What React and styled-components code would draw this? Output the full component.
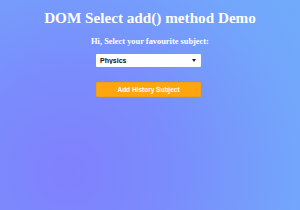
import React from 'react';
import styled, { createGlobalStyle } from 'styled-components';

const GlobalStyle = createGlobalStyle`
  html, body {
    margin: 0;
    padding: 0;
  }
  body {
    font-family: 'Liberation Serif', 'Times New Roman', serif;
  }
`;

const Page = styled.div`
  width: 300px;
  height: 210px;
  box-sizing: border-box;
  padding-top: 8px;
  display: flex;
  flex-direction: column;
  align-items: center;
  color: #fff;
  background: radial-gradient(circle at 23% 82%, #8080fd 0%, #7a8cfc 35%, #72a6fb 80%, #70aafa 100%);
`;

const Title = styled.h1`
  margin: 0;
  font-size: 15.2px;
  font-weight: bold;
  line-height: 20px;
`;

const Prompt = styled.p`
  margin: 9px 0 0;
  font-size: 8.4px;
  font-weight: bold;
  line-height: 10px;
`;

const SelectWrap = styled.div`
  position: relative;
  margin-top: 7px;
  margin-right: 3px;
  &::after {
    content: '';
    position: absolute;
    right: 5px;
    top: 5px;
    border-left: 2px solid transparent;
    border-right: 2px solid transparent;
    border-top: 3px solid #222;
    pointer-events: none;
  }
`;

const SelectBox = styled.select`
  display: block;
  width: 105px;
  height: 13px;
  box-sizing: border-box;
  border: none;
  border-radius: 1px;
  padding: 0 0 0 4px;
  font-family: 'Liberation Sans', Arial, sans-serif;
  font-size: 7px;
  font-weight: bold;
  color: #111;
  background: #fff;
  appearance: none;
  -webkit-appearance: none;
`;

const Button = styled.button`
  margin-top: 15px;
  margin-right: 3px;
  width: 105px;
  height: 15px;
  box-sizing: border-box;
  border: 1px solid #f0a010;
  border-radius: 1px;
  background: #ffa50f;
  color: #fff;
  font-family: 'Liberation Sans', Arial, sans-serif;
  font-size: 6.5px;
  font-weight: bold;
  padding: 0;
`;

export default function App() {
  return (
    <>
      <GlobalStyle />
      <Page>
        <Title>DOM Select add() method Demo</Title>
        <Prompt>Hi, Select your favourite subject:</Prompt>
        <SelectWrap>
          <SelectBox defaultValue="physics">
            <option value="physics">Physics</option>
            <option value="chemistry">Chemistry</option>
            <option value="maths">Maths</option>
          </SelectBox>
        </SelectWrap>
        <Button>Add History Subject</Button>
      </Page>
    </>
  );
}
